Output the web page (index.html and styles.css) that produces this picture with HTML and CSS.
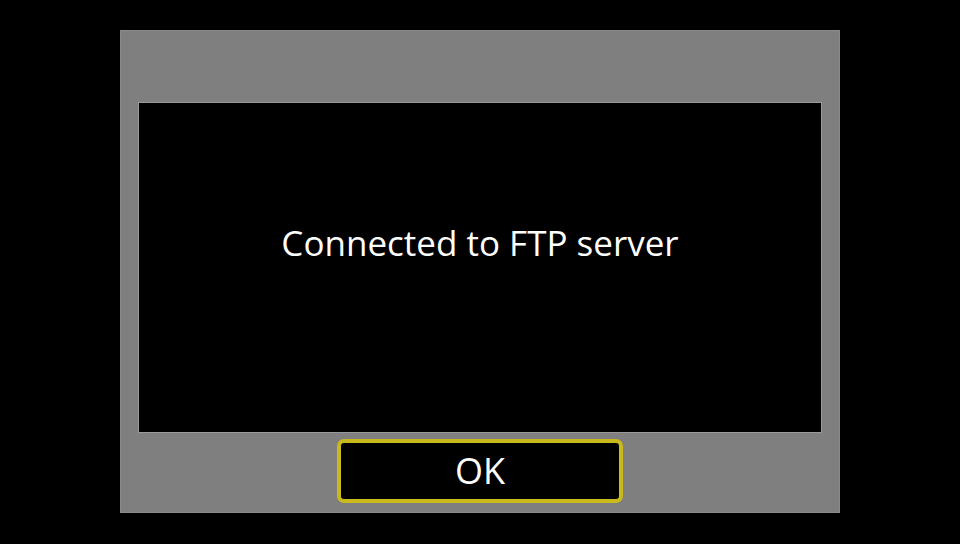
FILE: index.html
```html
<!DOCTYPE html>
<html>
<head>
<meta charset="utf-8">
<link rel="stylesheet" href="styles.css">
</head>
<body>
<div class="screen">
  <div class="panel">
    <div class="message"><span class="message-text">Connected to FTP server</span></div>
    <div class="actions"><button class="ok-button">OK</button></div>
  </div>
</div>
</body>
</html>
```
FILE: styles.css
```css
html, body {
  margin: 0;
  padding: 0;
  background: #000;
}
.screen {
  width: 960px;
  height: 544px;
  padding-top: 30px;
  box-sizing: border-box;
  display: flex;
  justify-content: center;
}
.panel {
  width: 720px;
  height: 483px;
  box-sizing: border-box;
  background: #7f7f7f;
  border: 1px solid #8a8a8a;
  padding: 71px 17px 0 17px;
  display: flex;
  flex-direction: column;
}
.message {
  height: 331px;
  box-sizing: border-box;
  background: #000;
  border: 1px solid #9a9a9a;
  display: flex;
  align-items: center;
  justify-content: center;
}
.message-text {
  font-family: "Open Sans", "Noto Sans", sans-serif;
  font-size: 35px;
  color: #fff;
  margin-top: -50px;
}
.actions {
  display: flex;
  justify-content: center;
  padding-top: 6px;
}
.ok-button {
  width: 286px;
  height: 64px;
  box-sizing: border-box;
  background: #000;
  border: 4px solid #c9b91c;
  border-radius: 7px;
  color: #fff;
  font-family: "Open Sans", "Noto Sans", sans-serif;
  font-size: 36px;
  padding: 0;
  line-height: 1;
}
```
